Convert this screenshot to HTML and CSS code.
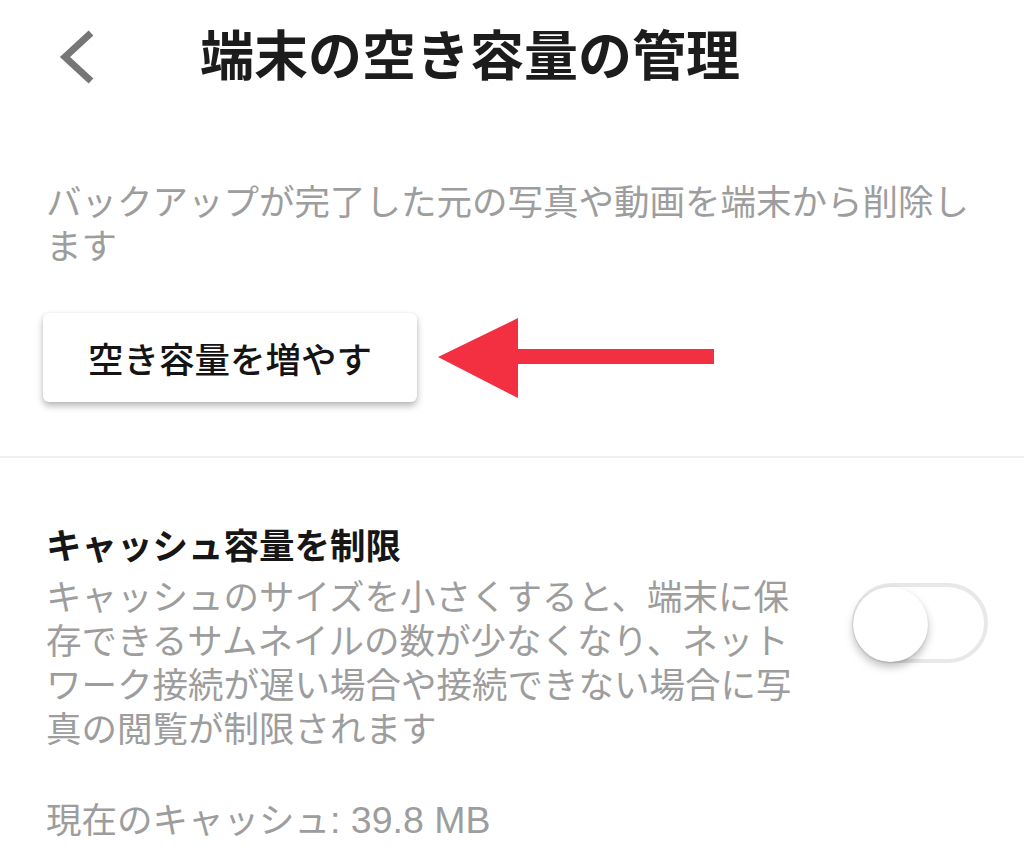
FILE: index.html
```html
<!DOCTYPE html>
<html lang="ja">
<head>
<meta charset="utf-8">
<title>端末の空き容量の管理</title>
<link rel="stylesheet" href="styles.css">
</head>
<body>
<header class="header">
  <svg class="back" width="40" height="56" viewBox="0 0 40 56"><polyline points="33,4 7,28 33,52" fill="none" stroke="#767676" stroke-width="7" stroke-linejoin="miter" stroke-linecap="butt"/></svg>
  <h1 class="title">端末の空き容量の管理</h1>
</header>
<section class="free">
  <p class="desc">バックアップが完了した元の写真や動画を端末から削除します</p>
  <div class="action-row">
    <button class="btn">空き容量を増やす</button>
    <svg class="arrow" width="280" height="82" viewBox="0 0 280 82"><polygon points="2,40 82,1 82,32 278,32 278,47 82,47 82,81" fill="#f23042"/></svg>
  </div>
</section>
<hr class="divider">
<section class="cache">
  <div class="cache-row">
    <div class="cache-text">
      <h2 class="cache-title">キャッシュ容量を制限</h2>
      <p class="cache-desc">キャッシュのサイズを小さくすると、端末に保存できるサムネイルの数が少なくなり、ネットワーク接続が遅い場合や接続できない場合に写真の閲覧が制限されます</p>
    </div>
    <div class="toggle"><span class="knob"></span></div>
  </div>
  <p class="current">現在のキャッシュ<span class="latin">: 39.8 MB</span></p>
</section>
</body>
</html>
```
FILE: styles.css
```css
html, body {
  margin: 0;
  padding: 0;
  background: #ffffff;
}
body {
  font-family: "Noto Sans CJK JP", sans-serif;
  width: 1024px;
  height: 861px;
  overflow: hidden;
}
.header {
  display: flex;
  align-items: center;
  height: 104px;
  padding-left: 58px;
}
.back {
  display: block;
  margin-top: 9px;
}
.title {
  margin: 0 0 0 102px;
  font-size: 54px;
  line-height: 64px;
  font-weight: 700;
  color: #1c1c1c;
  letter-spacing: 0;
  position: relative;
  top: 1px;
}
.free {
  padding: 0 36px 0 46px;
}
.desc {
  margin: 74px 0 0 0;
  font-size: 35.5px;
  line-height: 44px;
  color: #9d9d9d;
}
.action-row {
  display: flex;
  align-items: center;
  margin-top: 47px;
  margin-left: -3px;
}
.btn {
  width: 374px;
  height: 89px;
  border: none;
  border-radius: 6px;
  background: #ffffff;
  box-shadow: 0 4px 7px rgba(0, 0, 0, 0.28), 0 0 2px rgba(0, 0, 0, 0.08);
  font-family: "Noto Sans CJK JP", sans-serif;
  font-size: 35.5px;
  font-weight: 500;
  line-height: 1;
  color: #141414;
  padding: 0;
}
.arrow {
  display: block;
  margin-left: 19px;
}
.divider {
  margin: 54px 0 0 0;
  border: none;
  height: 2px;
  background: #efefef;
}
.cache {
  padding: 64px 36px 0 46px;
}
.cache-row {
  display: flex;
  justify-content: space-between;
  align-items: flex-start;
}
.cache-text {
  width: 760px;
}
.cache-title {
  margin: 0;
  font-size: 35.5px;
  line-height: 44px;
  font-weight: 700;
  color: #161616;
}
.cache-desc {
  margin: 7px 0 0 0;
  font-size: 35.5px;
  line-height: 44px;
  color: #9d9d9d;
}
.toggle {
  position: relative;
  box-sizing: border-box;
  width: 136px;
  height: 80px;
  margin-top: 61px;
  border: 4px solid #e8e8e8;
  border-radius: 40px;
  background: #ffffff;
  flex: none;
}
.knob {
  position: absolute;
  left: -3px;
  top: 0;
  width: 75px;
  height: 75px;
  border-radius: 50%;
  background: #ffffff;
  box-shadow: 0 5px 9px rgba(0, 0, 0, 0.25), 0 1px 2px rgba(0, 0, 0, 0.1);
}
.current {
  margin: 47px 0 0 0;
  font-size: 35.5px;
  line-height: 44px;
  color: #9d9d9d;
}
.latin {
  font-family: "Liberation Sans", sans-serif;
  font-size: 37.5px;
}
```
